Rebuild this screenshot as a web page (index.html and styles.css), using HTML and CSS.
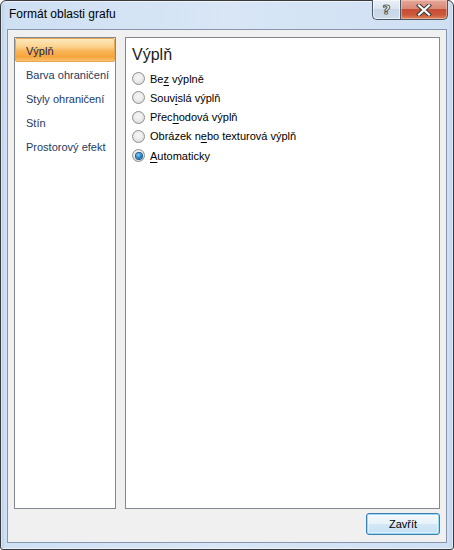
FILE: index.html
```html
<!DOCTYPE html>
<html lang="cs">
<head>
<meta charset="utf-8">
<title>Formát oblasti grafu</title>
<link rel="stylesheet" href="styles.css">
</head>
<body>
<div class="window">
  <div class="titlebar">
    <span class="title">Formát oblasti grafu</span>
    <div class="caption-btns">
      <div class="cbtn help"><span class="qmark">?</span></div>
      <div class="cbtn close">
        <svg width="18" height="12" viewBox="0 0 18 12">
          <path d="M4 1.5 L14 10.5 M14 1.5 L4 10.5" stroke="#3b3b3b" stroke-width="4.2" stroke-linecap="square" fill="none"/>
          <path d="M4 1.5 L14 10.5 M14 1.5 L4 10.5" stroke="#ffffff" stroke-width="2.2" stroke-linecap="square" fill="none"/>
        </svg>
      </div>
    </div>
  </div>
  <div class="client">
    <div class="panes">
      <ul class="nav">
        <li class="nav-item selected">Výplň</li>
        <li class="nav-item">Barva ohraničení</li>
        <li class="nav-item">Styly ohraničení</li>
        <li class="nav-item">Stín</li>
        <li class="nav-item">Prostorový efekt</li>
      </ul>
      <div class="content">
        <h1 class="heading">Výplň</h1>
        <div class="options">
          <div class="option"><span class="radio"></span><span class="label">Be<u>z</u> výplně</span></div>
          <div class="option"><span class="radio"></span><span class="label">Souv<u>i</u>slá výplň</span></div>
          <div class="option"><span class="radio"></span><span class="label">Přec<u>h</u>odová výplň</span></div>
          <div class="option"><span class="radio"></span><span class="label">Obrázek n<u>e</u>bo texturová výplň</span></div>
          <div class="option"><span class="radio checked"></span><span class="label"><u>A</u>utomaticky</span></div>
        </div>
      </div>
    </div>
    <div class="footer">
      <button class="btn">Zavřít</button>
    </div>
  </div>
</div>
</body>
</html>
```

FILE: styles.css
```css
* { box-sizing: border-box; }
html, body { margin: 0; padding: 0; }
body {
  width: 454px;
  height: 550px;
  background: #ffffff;
  font-family: "Liberation Sans", Arial, sans-serif;
  font-size: 11px;
  color: #000;
}
.window {
  width: 454px;
  height: 550px;
  border: 1px solid #3a3a3a;
  border-radius: 6px 6px 3px 3px;
  background: linear-gradient(to right, #b5cce8 0, #cfe0f3 4px, #d8e6f6 50%, #cfe0f3 calc(100% - 4px), #b9d0ea 100%);
  box-shadow: inset 0 0 0 1px rgba(255,255,255,0.55);
  display: flex;
  flex-direction: column;
}
.titlebar {
  height: 28px;
  display: flex;
  align-items: flex-start;
  padding-left: 8px;
  padding-right: 5px;
}
.title {
  padding-top: 5px;
  line-height: 16px;
  font-size: 12px;
  color: #000;
}
.caption-btns {
  margin-left: auto;
  display: flex;
  height: 20px;
  margin-top: -1px;
}
.cbtn {
  height: 20px;
  border: 1px solid #4b5563;
  border-top: none;
  display: flex;
  align-items: center;
  justify-content: center;
}
.help {
  width: 28px;
  border-right: none;
  border-radius: 0 0 0 5px;
  background: linear-gradient(to bottom, #e9eff7 0, #dbe5f1 45%, #c7d5e6 50%, #cfdcec 100%);
  box-shadow: inset 0 0 0 1px rgba(255,255,255,0.6);
}
.qmark {
  font-family: "DejaVu Sans", sans-serif;
  font-weight: bold;
  font-size: 13px;
  line-height: 14px;
  color: #fff;
  -webkit-text-stroke: 0.6px #3a3a3a;
  text-shadow: 0 0 1px #222, 0 0 1px #222;
}
.close {
  width: 48px;
  border-radius: 0 0 5px 0;
  background: linear-gradient(to bottom, #e6a797 0, #d98a78 45%, #c84d36 50%, #cc5a3d 80%, #de8a5f 100%);
  box-shadow: inset 0 0 0 1px rgba(255,220,210,0.45);
}
.close svg { display: block; }
.client {
  flex: 1;
  margin: 0 6px 6px 6px;
  border: 1px solid #8596ad;
  background: #f0f0f0;
  padding: 7px 6px 7px 6px;
  display: flex;
  flex-direction: column;
}
.panes {
  display: flex;
  gap: 9px;
  height: 472px;
}
.nav {
  width: 102px;
  margin: 0;
  padding: 0;
  list-style: none;
  background: #fff;
  border: 1px solid #828790;
}
.nav-item {
  height: 24px;
  line-height: 24px;
  padding-left: 11px;
  padding-top: 1px;
  color: #1e3a5f;
  white-space: nowrap;
}
.nav-item.selected {
  color: #1c1c4a;
  border: 1px solid #e8a650;
  border-radius: 2px;
  padding-left: 10px;
  line-height: 22px;
  background: linear-gradient(to bottom, #fde8bd 0, #fcd38c 35%, #f8b458 55%, #f6a53c 80%, #fbc270 100%);
}
.content {
  flex: 1;
  background: #fff;
  border: 1px solid #828790;
  padding: 7px 0 0 6px;
}
.heading {
  margin: 0 0 4px 0;
  font-size: 16px;
  font-weight: normal;
  line-height: 20px;
  color: #1a1a1a;
}
.option {
  height: 19.25px;
  display: flex;
  align-items: center;
  color: #000;
}
.radio {
  width: 13px;
  height: 13px;
  margin-right: 5px;
  border-radius: 50%;
  border: 1px solid #8f8f8f;
  background: radial-gradient(circle at 50% 40%, #f6f6f6 0, #ececec 45%, #d0d0d0 100%);
  display: flex;
  align-items: center;
  justify-content: center;
  flex: none;
}
.radio.checked::after {
  content: "";
  width: 6px;
  height: 6px;
  border-radius: 50%;
  background: radial-gradient(circle at 40% 35%, #8fd4f7 0, #2a8bc9 45%, #0b4f86 100%);
  box-shadow: 0 0 0 1px #1d5a86;
}
.label u { text-decoration: underline; text-underline-offset: 2px; }
.footer {
  display: flex;
  justify-content: flex-end;
  padding-top: 4px;
}
.btn {
  width: 74px;
  height: 22px;
  font-family: inherit;
  font-size: 11px;
  color: #000;
  border: 1px solid #3c7fb1;
  border-radius: 3px;
  background: linear-gradient(to bottom, #f4f9fc 0, #e6f2fa 50%, #d3e8f6 50%, #c6e1f3 100%);
  box-shadow: inset 0 0 0 1px #9ad9f5, inset 0 0 0 2px rgba(255,255,255,0.4);
  padding: 0;
}
```
